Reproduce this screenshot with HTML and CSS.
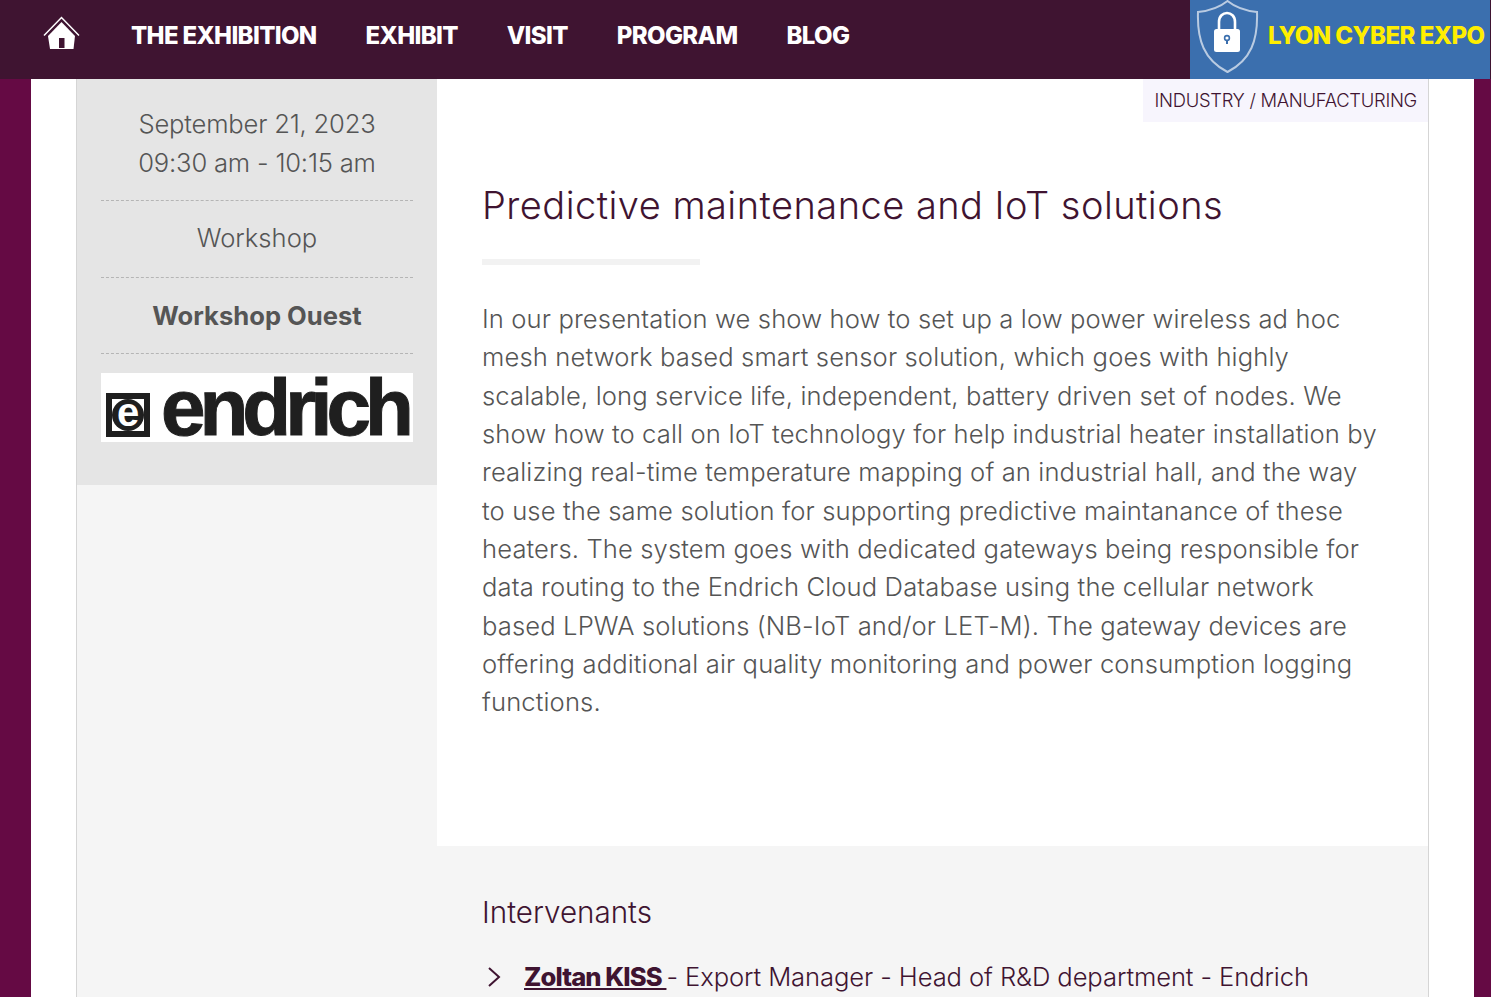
FILE: index.html
```html
<!DOCTYPE html>
<html lang="en">
<head>
    <meta charset="UTF-8">
    <meta name="viewport" content="width=device-width, initial-scale=1.0">
    <title>Predictive maintenance and IoT solutions</title>
    <link rel="stylesheet" href="styles.css">
</head>
<body>
    <header class="topbar">
        <nav class="nav">
            <a class="nav-home" href="#">
                <svg width="38" height="34" viewBox="0 0 38 34">
                    <path d="M2 19.5 L19.5 1.5 L37 19.5" fill="none" stroke="#fff" stroke-width="1.5"/>
                    <path d="M6 20 L19.5 6 L33 20 L31.5 33 L8 33 Z" fill="#fff"/>
                    <rect x="17" y="22" width="5.5" height="10" fill="#3f1431"/>
                </svg>
            </a>
            <a class="nav-link" href="#">THE EXHIBITION</a>
            <a class="nav-link" href="#">EXHIBIT</a>
            <a class="nav-link" href="#">VISIT</a>
            <a class="nav-link" href="#">PROGRAM</a>
            <a class="nav-link" href="#">BLOG</a>
        </nav>
        <a class="brand" href="#">
            <svg width="64" height="76" viewBox="0 0 64 76">
                <path d="M32.5 1 C40 7 52 11 62 12 C63 40 56 60 32.5 72 C9 60 2 40 3 12 C13 11 25 7 32.5 1 Z" fill="none" stroke="#b9cbe2" stroke-width="2"/>
                <path d="M24 31 V22 C24 10 40 10 40 22 V31" fill="none" stroke="#fff" stroke-width="2.6"/>
                <rect x="19" y="29" width="26" height="23" rx="2.5" fill="#fff"/>
                <circle cx="32" cy="38" r="2.4" fill="none" stroke="#3b6fae" stroke-width="1.6"/>
                <rect x="31" y="40" width="2" height="4" fill="#3b6fae"/>
            </svg>
            <span class="brand-name">LYON CYBER EXPO</span>
        </a>
    </header>

    <div class="page">
        <div class="content">
            <aside class="side">
                <div class="side-box">
                    <div class="side-row side-date">September 21, 2023<br>09:30 am - 10:15 am</div>
                    <div class="side-row side-kind">Workshop</div>
                    <div class="side-row side-room">Workshop Ouest</div>
                    <div class="sponsor">
                        <span class="sponsor-mark"><span class="sponsor-letter">e</span></span>
                        <span class="sponsor-name">endrich</span>
                    </div>
                </div>
            </aside>
            <main class="main">
                <section class="talk">
                    <div class="talk-tag">INDUSTRY / MANUFACTURING</div>
                    <h1 class="talk-title">Predictive maintenance and IoT solutions</h1>
                    <div class="talk-rule"></div>
                    <p class="talk-text">In our presentation we show how to set up a low power wireless ad hoc<br>
                    mesh network based smart sensor solution, which goes with highly<br>
                    scalable, long service life, independent, battery driven set of nodes. We<br>
                    show how to call on IoT technology for help industrial heater installation by<br>
                    realizing real-time temperature mapping of an industrial hall, and the way<br>
                    to use the same solution for supporting predictive maintanance of these<br>
                    heaters. The system goes with dedicated gateways being responsible for<br>
                    data routing to the Endrich Cloud Database using the cellular network<br>
                    based LPWA solutions (NB-IoT and/or LET-M). The gateway devices are<br>
                    offering additional air quality monitoring and power consumption logging<br>
                    functions.</p>
                </section>
                <section class="speakers">
                    <h2 class="speakers-title">Intervenants</h2>
                    <div class="speaker">
                        <svg class="speaker-arrow" width="14" height="20" viewBox="0 0 14 20">
                            <path d="M2 1 L12 10 L2 19" fill="none" stroke="#3f1431" stroke-width="2"/>
                        </svg>
                        <span><a class="speaker-name" href="#">Zoltan KISS </a> - Export Manager - Head of R&amp;D department - Endrich</span>
                    </div>
                </section>
            </main>
        </div>
    </div>
</body>
</html>
```
FILE: styles.css
```css
html, body {
    margin: 0;
    height: 997px;
    overflow: hidden;
}
body {
    background-color: #650a44;
    font-family: "Inter", "Open Sans", sans-serif;
    color: #555;
}
.topbar {
    display: flex;
    justify-content: space-between;
    height: 79px;
    background-color: #3f1431;
}
.nav {
    display: flex;
    align-items: center;
    padding: 0 0 8px 42px;
}
.nav-home {
    display: flex;
    width: 89px;
    margin-top: -5px;
}
.nav-link {
    margin-right: 49px;
    color: #fff;
    font-size: 24px;
    font-weight: 800;
    letter-spacing: -0.65px;
    text-decoration: none;
}
.brand {
    display: flex;
    align-items: flex-start;
    width: 300px;
    margin-right: 1px;
    background-color: #3b6fae;
    text-decoration: none;
}
.brand svg {
    margin-left: 5px;
    flex-shrink: 0;
}
.brand-name {
    margin: 21px 0 0 9px;
    color: #ffee00;
    font-size: 24px;
    font-weight: 800;
    letter-spacing: -0.55px;
    white-space: nowrap;
}
.page {
    margin: 0 17px 0 31px;
    padding: 0 45px;
    background-color: #fff;
    height: 918px;
}
.content {
    display: flex;
    height: 100%;
    border-left: 1px solid #d5d5d5;
    border-right: 1px solid #d5d5d5;
    background-color: #f5f5f5;
}
.side {
    width: 360px;
    flex-shrink: 0;
}
.side-box {
    height: 406px;
    box-sizing: border-box;
    padding: 25px 24px 0;
    background-color: #e5e5e5;
    text-align: center;
    font-size: 25.6px;
    font-weight: 300;
    line-height: 39px;
}
.side-row {
    padding-bottom: 18px;
    margin-bottom: 18px;
    border-bottom: 1px dashed #b5b5b5;
}
.side-date {
    margin-bottom: 17px;
    letter-spacing: -0.2px;
}
.side-kind {
    padding-bottom: 20px;
}
.side-room {
    font-weight: 700;
    margin-bottom: 19px;
}
.sponsor {
    display: flex;
    align-items: center;
    height: 69px;
    padding-left: 5px;
    background-color: #fff;
    color: #1f1f1f;
}
.sponsor-mark {
    display: flex;
    align-items: center;
    justify-content: center;
    width: 44px;
    height: 44px;
    box-sizing: border-box;
    flex-shrink: 0;
    margin: 15px 11px 0 0;
    border: 6px solid #1f1f1f;
    background-color: #fff;
}
.sponsor-letter {
    width: 32px;
    height: 32px;
    border-radius: 50%;
    background-color: #1f1f1f;
    color: #fff;
    font: 700 40px/26px "Liberation Sans", sans-serif;
}
.sponsor-name {
    font: 700 80px/69px "Liberation Sans", sans-serif;
    letter-spacing: -6px;
    -webkit-text-stroke: 1px #1f1f1f;
}
.main {
    flex: 1;
}
.talk {
    position: relative;
    height: 767px;
    box-sizing: border-box;
    padding: 101px 45px 0;
    background-color: #fff;
}
.talk-tag {
    position: absolute;
    top: 0;
    right: 0;
    padding: 8px 11px 9px;
    background-color: #f7f5fd;
    color: #3f1431;
    font-size: 18.4px;
    font-weight: 300;
    line-height: 26px;
    letter-spacing: -0.28px;
}
.talk-title {
    margin: 0;
    color: #3f1431;
    font-size: 38px;
    font-weight: 300;
    line-height: 50px;
    letter-spacing: 0.47px;
}
.talk-rule {
    width: 218px;
    height: 6px;
    margin-top: 29px;
    background-color: #f2f2f2;
}
.talk-text {
    margin: 35px 0 0;
    font-size: 25.6px;
    font-weight: 300;
    line-height: 38.33px;
    letter-spacing: 0.12px;
    white-space: nowrap;
}
.speakers {
    padding: 46px 45px 0;
}
.speakers-title {
    margin: 0;
    color: #3f1431;
    font-size: 29.6px;
    font-weight: 300;
    line-height: 40px;
}
.speaker {
    display: flex;
    align-items: center;
    margin-top: 26px;
    color: #3f1431;
    font-size: 25.6px;
    font-weight: 300;
    line-height: 38px;
    letter-spacing: -0.1px;
    white-space: nowrap;
}
.speaker-arrow {
    margin: 0 23px 0 5px;
}
.speaker-name {
    color: #3f1431;
    font-weight: 800;
    letter-spacing: -0.9px;
    text-decoration: underline;
}
```
